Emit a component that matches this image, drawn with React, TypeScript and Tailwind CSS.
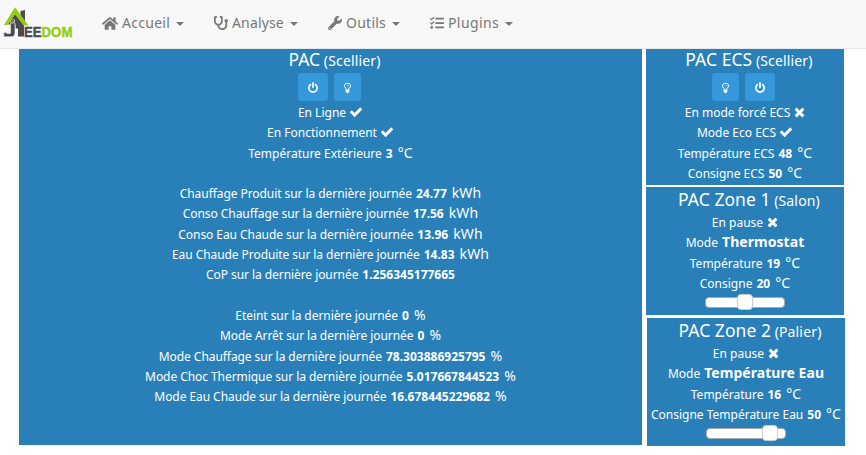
import React from "react";
import { FaHome, FaStethoscope, FaWrench, FaTasks } from "react-icons/fa";

const paths = {
  power:
    "M1664 896q0 156-61 298t-164 245-245 164-298 61-298-61-245-164-164-245-61-298q0-182 80.5-343t226.5-270q43-32 95.5-25t83.5 50q32 42 24.5 94.5t-49.5 84.5q-98 74-151.5 181t-53.500 228q0 104 40.500 198.500t109.500 163.500 163.500 109.500 198.500 40.500 198.500-40.500 163.500-109.500 109.500-163.500 40.500-198.500q0-121-53.500-228t-151.500-181q-42-32-49.500-84.500t24.500-94.500q31-43 84-50t95 25q146 109 226.500 270t80.500 343zm-640-768v640q0 52-38 90t-90 38-90-38-38-90v-640q0-52 38-90t90-38 90 38 38 90z",
  check:
    "M1671 566q0 40-28 68l-724 724-136 136q-28 28-68 28t-68-28l-136-136-362-362q-28-28-28-68t28-68l136-136q28-28 68-28t68 28l294 295 656-657q28-28 68-28t68 28l136 136q28 28 28 68z",
  times:
    "M1490 1322q0 40-28 68l-136 136q-28 28-68 28t-68-28l-294-294-294 294q-28 28-68 28t-68-28l-136-136q-28-28-28-68t28-68l294-294-294-294q-28-28-28-68t28-68l136-136q28-28 68-28t68 28l294 294 294-294q28-28 68-28t68 28l136 136q28 28 28 68t-28 68l-294 294 294 294q28 28 28 68z",
  bulb: "M1120 576q0 13-9.5 22.5t-22.5 9.5-22.5-9.5-9.5-22.5q0-46-54-71t-106-25q-13 0-22.5-9.5t-9.5-22.5 9.5-22.5 22.5-9.5q50 0 99.5 16t87 54 37.5 90zm160 0q0-72-34.5-134t-90-101.5-123-62-136.5-22.5-136.5 22.5-123 62-90 101.5-34.5 134q0 101 68 180 10 11 30.5 33t30.5 33q128 153 141 298h228q13-145 141-298 10-11 30.5-33t30.5-33q68-79 68-180zm128 0q0 155-103 268-45 49-74.5 87t-59.5 95.5-34 107.5q47 28 47 82 0 37-25 64 25 27 25 64 0 52-45 81 13 23 13 47 0 46-31.5 71t-77.5 25q-20 44-60 70t-87 26-87-26-60-70q-46 0-77.5-25t-31.5-71q0-24 13-47-45-29-45-81 0-37 25-64-25-27-25-64 0-54 47-82-4-50-34-107.5t-59.5-95.5-74.5-87q-103-113-103-268 0-99 44.5-184.5t117-142 164-89 186.5-32.5 186.5 32.5 164 89 117 142 44.5 184.5z",
};

function Glyph({ name, viewBox, className }: { name: keyof typeof paths; viewBox: string; className: string }) {
  return (
    <svg viewBox={viewBox} className={className} fill="currentColor">
      <path d={paths[name]} />
    </svg>
  );
}

function Logo() {
  return (
    <svg width="72" height="34" viewBox="0 0 72 34" className="ml-[3px] mt-[5px] shrink-0">
      <path d="M17.500 6l4.500-1v14h-4.500zM5.500 15.500l6.500-6.500 9 9v13.500h-6v-8h-2.500v-4h-7z" fill="#4a4a50" />
      <path d="M7.500 14.800h4v2.200h-4zM7.500 18H12v10q0 3.800-3.500 3.800H.8v-4.300h3v1h3.700z" fill="#4a4a50" stroke="#f8f8f8" strokeWidth=".6" />
      <path d="M1 20L12 2.300 25.500 20.500h-5L12 9.500 5 20z" fill="#97cc13" />
      <text x="21" y="31.800" fontFamily="Liberation Sans, sans-serif" fontWeight="700" fontSize="14" textLength="17.500" lengthAdjust="spacingAndGlyphs" fill="#4a4a50" stroke="#4a4a50" strokeWidth=".4">EE</text>
      <text x="38.500" y="31.800" fontFamily="Liberation Sans, sans-serif" fontWeight="700" fontSize="14" textLength="31" lengthAdjust="spacingAndGlyphs" fill="#97cc13" stroke="#97cc13" strokeWidth=".4">DOM</text>
    </svg>
  );
}

function NavItem({ icon, label, className }: { icon: React.ReactNode; label: string; className: string }) {
  return (
    <a className={`flex shrink-0 items-center ${className}`}>
      {icon}
      <span className="ml-[4px] leading-5">{label}</span>
      <span className="ml-auto mt-[2px] border-x-4 border-t-4 border-x-transparent border-t-[#777]" />
    </a>
  );
}

function Title({ name, room }: { name: string; room: string }) {
  return (
    <div className="h-[23px] pl-[8px] text-[17.500px] leading-[21px] tracking-[0.05px]">
      {name} <span className="-ml-px text-[14px] tracking-[0.15px]">({room})</span>
    </div>
  );
}

interface RowProps {
  label?: string;
  value?: string;
  unit?: string;
  on?: boolean;
  large?: boolean;
}

function Row({ label = "", value, unit, on, large }: RowProps) {
  const tracking = label.length > 25 ? "tracking-[-0.065px]" : "tracking-normal";
  return (
    <div className="flex h-[20.300px] items-baseline justify-center gap-1 text-[14px] leading-5 before:-mr-1 before:w-0 before:content-['\200b']">
      {label && <span className={`text-[12px] ${tracking}`}>{label}</span>}
      {value && <strong className={large ? "text-[14px] tracking-[0.05px]" : "text-[12px]"}>{value}</strong>}
      {unit && <span className="ml-px tracking-[0.1px]">{unit}</span>}
      {on === true && <Glyph name="check" viewBox="0 128 1792 1536" className="-ml-px mb-px h-[12px] w-[14px] self-center" />}
      {on === false && <Glyph name="times" viewBox="190 128 1408 1536" className="mb-px h-[12px] w-[11px] self-center" />}
    </div>
  );
}

function PowerButton() {
  return (
    <button className="flex h-7 w-[30px] items-center justify-center rounded-[3px] bg-[#3498db] pt-px">
      <Glyph name="power" viewBox="128 0 1536 1664" className="h-[11px] w-[10px]" />
    </button>
  );
}

function BulbButton() {
  return (
    <button className="flex h-7 w-[27px] items-center justify-center rounded-[3px] bg-[#3498db] pt-px">
      <Glyph name="bulb" viewBox="384 0 1024 1792" className="h-3 w-[7px]" />
    </button>
  );
}

function Slider({ offset }: { offset: number }) {
  return (
    <div className="mx-auto mt-[1px] flex h-4 w-[80px] items-center">
      <div className="flex h-[11px] w-full items-center rounded-[4px] border border-[#aaa] bg-white">
        <span className="h-4 w-4 shrink-0 rounded-[4px] border border-[#ccc] bg-white" style={{ marginLeft: offset }} />
      </div>
    </div>
  );
}

export default function App() {
  return (
    <div className="h-[455px] w-[866px] overflow-hidden bg-white font-['Noto_Sans',sans-serif]">
      <nav className="flex h-[49px] border-b border-[#e7e7e7] bg-[#f8f8f8] text-[14px] text-[#777]">
        <Logo />
        <div className="flex h-[46px]">
          <NavItem className="ml-[27px] w-[82px] tracking-[0.28px]" label="Accueil" icon={<FaHome className="h-[15px] w-[16px]" />} />
          <NavItem className="ml-[30px] w-[84px] tracking-[0.15px]" label="Analyse" icon={<FaStethoscope className="h-[14px] w-[14px]" />} />
          <NavItem className="ml-[30px] w-[72px] tracking-[0.25px]" label="Outils" icon={<FaWrench className="h-[14px] w-[14px]" />} />
          <NavItem className="ml-[30px] w-[83px] tracking-[0.4px]" label="Plugins" icon={<FaTasks className="h-[14px] w-[14px]" />} />
        </div>
      </nav>
      <main className="ml-[19px] flex items-start gap-1 text-center text-white">
        <section className="h-[396px] w-[623px] bg-[#2980b9]">
          <Title name="PAC" room="Scellier" />
          <div className="mt-px mb-px flex justify-center gap-[6px] pr-[2px]">
            <PowerButton />
            <BulbButton />
          </div>
          <Row label="En Ligne" on />
          <Row label="En Fonctionnement" on />
          <Row label="Température Extérieure" value="3" unit="°C" />
          <Row />
          <Row label="Chauffage Produit sur la dernière journée" value="24.77" unit="kWh" />
          <Row label="Conso Chauffage sur la dernière journée" value="17.56" unit="kWh" />
          <Row label="Conso Eau Chaude sur la dernière journée" value="13.96" unit="kWh" />
          <Row label="Eau Chaude Produite sur la dernière journée" value="14.83" unit="kWh" />
          <Row label="CoP sur la dernière journée" value="1.256345177665" />
          <Row />
          <Row label="Eteint sur la dernière journée" value="0" unit="%" />
          <Row label="Mode Arrêt sur la dernière journée" value="0" unit="%" />
          <Row label="Mode Chauffage sur la dernière journée" value="78.303886925795" unit="%" />
          <Row label="Mode Choc Thermique sur la dernière journée" value="5.017667844523" unit="%" />
          <Row label="Mode Eau Chaude sur la dernière journée" value="16.678445229682" unit="%" />
        </section>
        <div className="w-[199px]">
          <section className="h-[136px] w-[198px] bg-[#2980b9]">
            <Title name="PAC ECS" room="Scellier" />
            <div className="mt-px mb-px flex justify-center gap-[6px] pr-[3px]">
              <BulbButton />
              <PowerButton />
            </div>
            <Row label="En mode forcé ECS" on={false} />
            <Row label="Mode Eco ECS" on />
            <Row label="Température ECS" value="48" unit="°C" />
            <Row label="Consigne ECS" value="50" unit="°C" />
          </section>
          <section className="mt-[2px] h-[128px] w-[198px] bg-[#2980b9] pt-[2px]">
            <Title name="PAC Zone 1" room="Salon" />
            <Row label="En pause" on={false} />
            <Row label="Mode" value="Thermostat" large />
            <Row label="Température" value="19" unit="°C" />
            <Row label="Consigne" value="20" unit="°C" />
            <Slider offset={31} />
          </section>
          <section className="mt-[3px] ml-px h-[128px] w-[198px] bg-[#2980b9] pt-[2px]">
            <Title name="PAC Zone 2" room="Palier" />
            <Row label="En pause" on={false} />
            <Row label="Mode" value="Température Eau" large />
            <Row label="Température" value="16" unit="°C" />
            <Row label="Consigne Température Eau" value="50" unit="°C" />
            <Slider offset={55} />
          </section>
        </div>
      </main>
    </div>
  );
}
